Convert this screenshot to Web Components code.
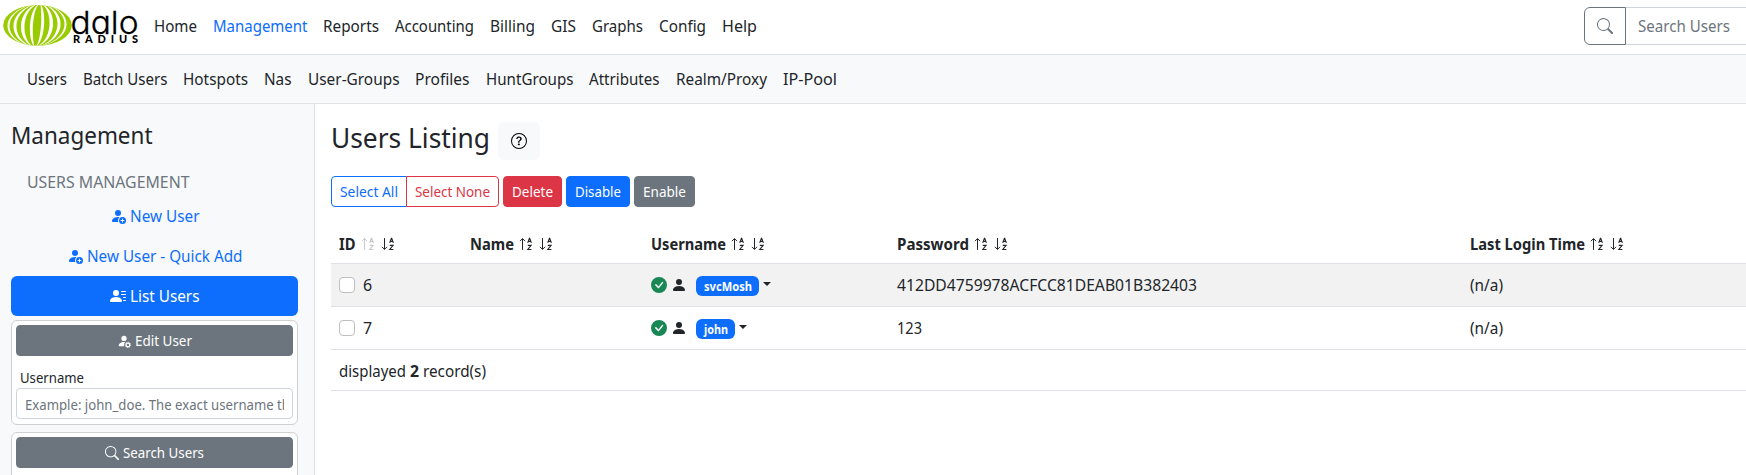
<!DOCTYPE html>
<html lang="en"><head><meta charset="utf-8"><title>daloRADIUS</title>
<style>
html,body{margin:0;height:100%;overflow:hidden;background:#fff}
body{font-family:"Noto Sans",sans-serif;font-size:16px;line-height:24px;color:#212529}
</style></head><body>
<dalo-app></dalo-app>
<script>
const def=(name,css,html,after)=>customElements.define(name,class extends HTMLElement{
  connectedCallback(){
    if(this.shadowRoot)return;
    const r=this.attachShadow({mode:'open'});
    const t=document.createElement('template');
    t.innerHTML='<style>*{box-sizing:border-box}'+css+'</style>'+(typeof html==='function'?html(this):html);
    r.appendChild(t.content.cloneNode(true));
    if(after)after(this,r);
  }
});
/* Text run with a fixed advance width: glyphs are condensed from the natural width. */
def('fit-text',':host{display:inline-block;white-space:pre}span{display:inline-block;transform-origin:0 50%}','<span><slot></slot></span>',(el,r)=>{
  const w=+el.getAttribute('w');if(!w)return;
  const s=r.querySelector('span');
  const nat=s.getBoundingClientRect().width;
  s.style.transform='scaleX('+(w/nat)+')';
  el.style.width=w+'px';
});
const ICONS={
 search:'<path d="M11.742 10.344a6.5 6.5 0 1 0-1.397 1.398h-.001q.044.06.098.115l3.85 3.85a1 1 0 0 0 1.415-1.414l-3.85-3.85a1 1 0 0 0-.115-.1zM12 6.5a5.5 5.5 0 1 1-11 0 5.5 5.5 0 0 1 11 0"/>',
 help:'<path d="M8 15A7 7 0 1 1 8 1a7 7 0 0 1 0 14m0 1A8 8 0 1 0 8 0a8 8 0 0 0 0 16"/><path d="M5.255 5.786a.237.237 0 0 0 .241.247h.825c.138 0 .248-.113.266-.25.09-.656.54-1.134 1.342-1.134.686 0 1.314.343 1.314 1.168 0 .635-.374.927-.965 1.371-.673.489-1.206 1.06-1.168 1.987l.003.217a.25.25 0 0 0 .25.246h.811a.25.25 0 0 0 .25-.25v-.105c0-.718.273-.927 1.01-1.486.609-.463 1.244-.977 1.244-2.056 0-1.511-1.276-2.241-2.673-2.241-1.267 0-2.655.59-2.75 2.286m1.557 5.763c0 .533.425.927 1.01.927.609 0 1.028-.394 1.028-.927 0-.552-.42-.94-1.029-.94-.584 0-1.009.388-1.009.94"/>',
 person:'<path d="M3 14s-1 0-1-1 1-4 6-4 6 3 6 4-1 1-1 1zm5-6a3 3 0 1 0 0-6 3 3 0 0 0 0 6"/>',
 check:'<path d="M16 8A8 8 0 1 1 0 8a8 8 0 0 1 16 0m-3.97-3.03a.75.75 0 0 0-1.08.022L7.477 9.417 5.384 7.323a.75.75 0 0 0-1.06 1.06L6.97 11.03a.75.75 0 0 0 1.079-.02l3.992-4.99a.75.75 0 0 0-.01-1.05z"/>',
 add:'<path d="M12.5 16a3.5 3.5 0 1 0 0-7 3.5 3.5 0 0 0 0 7m.5-5v1h1a.5.5 0 0 1 0 1h-1v1a.5.5 0 0 1-1 0v-1h-1a.5.5 0 0 1 0-1h1v-1a.5.5 0 0 1 1 0m-2-6a3 3 0 1 1-6 0 3 3 0 0 1 6 0"/><path d="M2 13c0 1 1 1 1 1h5.256A4.5 4.5 0 0 1 8 12.5a4.5 4.5 0 0 1 1.544-3.393Q8.844 9.002 8 9c-5 0-6 3-6 4"/>',
 gear:'<path d="M11 5a3 3 0 1 1-6 0 3 3 0 0 1 6 0"/><path d="M2 13c0 1 1 1 1 1h5.256A4.5 4.5 0 0 1 8 12.5a4.5 4.5 0 0 1 1.544-3.393Q8.844 9.002 8 9c-5 0-6 3-6 4"/><circle cx="12.5" cy="12.5" r="2.1" fill="none" stroke="currentColor" stroke-width="1.5"/><circle cx="12.5" cy="12.5" r="3.1" fill="none" stroke="currentColor" stroke-width="1" stroke-dasharray="1.3 1.13"/>',
 lines:'<path d="M6 8a3 3 0 1 0 0-6 3 3 0 0 0 0 6m-5 6s-1 0-1-1 1-4 6-4 6 3 6 4-1 1-1 1zM11 3.5a.5.5 0 0 1 .5-.5h4a.5.5 0 0 1 0 1h-4a.5.5 0 0 1-.5-.5m.5 2.5a.5.5 0 0 0 0 1h4a.5.5 0 0 0 0-1zm2 3a.5.5 0 0 0 0 1h2a.5.5 0 0 0 0-1zm0 3a.5.5 0 0 0 0 1h2a.5.5 0 0 0 0-1z"/>',
 up:'<g fill="none" stroke="currentColor"><path d="M4.5 13.5V3M2.2 4.9 4.5 2.6 6.8 4.9" stroke-linecap="round" stroke-linejoin="round"/><path stroke-width="1.1" d="M9.7 6.9 11.4 2.2h.3L13.4 6.9M10.3 5.4h2.5M9.8 9.4h3.3L9.8 13.5h3.6"/></g>',
 down:'<g fill="none" stroke="currentColor"><path d="M4.5 2.5V13M2.2 11.1 4.5 13.4 6.8 11.1" stroke-linecap="round" stroke-linejoin="round"/><path stroke-width="1.1" d="M9.7 6.9 11.4 2.2h.3L13.4 6.9M10.3 5.4h2.5M9.8 9.4h3.3L9.8 13.5h3.6"/></g>'
};
def('bi-icon',':host{display:inline-block;width:var(--s,16px);height:var(--s,16px);flex:none}svg{display:block;width:100%;height:100%}',
 el=>`<svg viewBox="0 0 16 16" fill="currentColor">${ICONS[el.getAttribute('name')]}</svg>`);
/* White gaps of the globe, given by where each crosses the equator. */
const meridian=(a,b)=>{const c=m=>((m-9.375)/.75).toFixed(1);return `<path d="M40 3C${c(a)} 9 ${c(a)} 41 35 47.5C${c(b)} 41 ${c(b)} 9 40 3"/>`};
def('dalo-logo',':host{display:block;width:145px;height:54px;flex:none}svg{display:block}',
`<svg width="145" height="54" viewBox="0 0 145 54"><defs><clipPath id="c"><ellipse cx="37.5" cy="25.3" rx="34.3" ry="20.4"/></clipPath></defs>
<ellipse cx="37.5" cy="25.3" rx="34.3" ry="20.4" fill="#9c0"/>
<g fill="#fff" clip-path="url(#c)">${[[7.5,9.5],[13.5,16.5],[21,24.5],[30,33],[41,44],[49.5,53],[57.5,60.5],[64.5,66.5]].map(p=>meridian(...p)).join('')}</g>
<text x="70.5" y="34" font-family="Inter" font-weight="300" font-size="31.5" textLength="68" lengthAdjust="spacingAndGlyphs" style="font-feature-settings:'cv11'" fill="#000" stroke="#000" stroke-width=".3">dalo</text>
<text x="73" y="43.3" font-family="Lato" font-weight="900" font-size="11" textLength="65" fill="#000">RADIUS</text></svg>`);
def('nav-bar',':host{display:flex;align-items:center;gap:16px}slot{display:contents}','<slot></slot>');
def('ui-button',`:host{display:flex;align-items:center;justify-content:center;height:31px;font-size:14px;line-height:21px;border-radius:4px;background:var(--bg,#6c757d);color:var(--fg,#fff);border:1px solid var(--bd,var(--bg,#6c757d));box-sizing:border-box;gap:4px;--s:14px}`,'<slot></slot>');
def('side-link',`:host{display:flex;align-items:center;justify-content:center;height:40px;gap:4px;color:#0d6efd;box-sizing:border-box}:host([active]){background:#0d6efd;color:#fff;border-radius:6px}`,'<slot></slot>');
def('side-card',`:host{display:block;box-sizing:border-box;background:#fff;border:1px solid #cfd0d1;border-radius:6px;padding:4px}`,'<slot></slot>');
def('search-box',`:host{display:flex;height:38px;width:200px;flex:none}.b{width:42px;border:1px solid #6c757d;border-radius:6px 0 0 6px;display:flex;align-items:center;justify-content:center;color:#6c757d}.i{flex:1;border:1px solid #ced4da;border-left:0;padding:6px 11.5px;color:#6c757d}`,
'<div class="b"><bi-icon name="search"></bi-icon></div><div class="i"><fit-text w="92">Search Users</fit-text></div>');
def('side-bar',`:host{display:block;width:315px;height:371px;background:#f8f9fa;border-right:1px solid #dee2e6;box-sizing:border-box;padding:16px 16px 0 11px;flex:none;overflow:hidden}
h4{margin:0;font-weight:400;font-size:24px;line-height:29px}.sub{color:#6c757d;padding:21px 0 0 15.5px;height:47px}
side-card{margin-top:4px;height:105px}.two{margin-top:7px}
.l{font-size:14px;line-height:21px;padding-left:4px;margin-top:11px}.in{border:1px solid #ced4da;border-radius:4px;height:31px;font-size:14px;line-height:21px;padding:5px 8px 3px;color:#6c757d;overflow:hidden;display:flex;margin:0}.in div{overflow:hidden;width:260px}`,
`<h4><fit-text w="141.5">Management</fit-text></h4><div class="sub"><fit-text w="162.5">USERS MANAGEMENT</fit-text></div>
<side-link><bi-icon name="add"></bi-icon><fit-text w="69.5">New User</fit-text></side-link>
<side-link><bi-icon name="add"></bi-icon><fit-text w="155.5">New User - Quick Add</fit-text></side-link>
<side-link active><bi-icon name="lines"></bi-icon><fit-text w="69.5">List Users</fit-text></side-link>
<side-card><ui-button><bi-icon name="gear"></bi-icon><fit-text w="57">Edit User</fit-text></ui-button><div class="l"><fit-text w="64">Username</fit-text></div><div class="in"><div><fit-text w="265">Example: john_doe. The exact username th</fit-text></div></div></side-card>
<side-card class="two"><ui-button><bi-icon name="search"></bi-icon><fit-text w="81">Search Users</fit-text></ui-button></side-card>`);
def('col-head',`:host{display:flex;align-items:center;font-weight:700;gap:4px}.dim{opacity:.25}`,
 el=>`<fit-text w="${el.getAttribute('w')}">${el.getAttribute('label')}</fit-text><bi-icon name="up" class="${el.hasAttribute('dim')?'dim':''}"></bi-icon><bi-icon name="down"></bi-icon>`);
def('user-cell',`:host{display:flex;align-items:center}.ok{color:#198754}.p{margin-left:4px}.bd{background:#0d6efd;color:#fff;font-weight:700;font-size:12px;line-height:12px;height:20px;border-radius:6px;padding:5px 7.5px 3px;margin-left:9px;margin-top:1px}.c{border:4.8px solid transparent;border-top-color:#212529;border-bottom:0;margin-left:4px;margin-bottom:3px}`,
 el=>`<bi-icon class="ok" name="check"></bi-icon><bi-icon class="p" name="person"></bi-icon><div class="bd"><fit-text w="${el.getAttribute('w')}">${el.getAttribute('label')}</fit-text></div><div class="c"></div>`);
def('data-row',`:host{display:grid;grid-template-columns:131px 181px 246px 573px 1fr;align-items:center;height:43px;border-bottom:1px solid #dee2e6;box-sizing:border-box;padding-left:8px}:host([odd]){background:#f2f2f2}:host([head]){height:41px;padding-top:1px}:host([foot]){height:41px;padding-top:1px}`,'<slot></slot>');
def('id-cell',`:host{display:flex;align-items:center;gap:8px}i{width:16px;height:16px;border:1px solid #bfbfbf;border-radius:4px;background:#fff}`,'<i></i><slot></slot>');
def('users-page',`:host{display:block;flex:1;min-width:0;padding:16px 0 0 16px}
header{display:flex;align-items:center;height:42px;margin-bottom:14px}h1{margin:-8px 0 0;font-weight:400;font-size:28px;line-height:34px}.q{width:42px;height:38px;border-radius:6px;background:#f8f9fa;display:flex;align-items:center;justify-content:center;color:#000;margin-left:8px}
.bar{display:flex;gap:4px;margin-bottom:16px}.grp{display:flex}.a{--bg:#fff;--fg:#0d6efd;--bd:#0d6efd;width:76px;border-radius:4px 0 0 4px;}.n{--bg:#fff;--fg:#dc3545;--bd:#dc3545;width:93px;margin-left:-1px;border-radius:0 4px 4px 0}.d{--bg:#dc3545;width:59px}.s{--bg:#0d6efd;width:64px}.e{width:61px}`,
`<header><h1><fit-text w="159">Users Listing</fit-text></h1><div class="q"><bi-icon name="help"></bi-icon></div></header>
<div class="bar"><div class="grp"><ui-button class="a"><fit-text w="58">Select All</fit-text></ui-button><ui-button class="n"><fit-text w="75">Select None</fit-text></ui-button></div><ui-button class="d"><fit-text w="41">Delete</fit-text></ui-button><ui-button class="s"><fit-text w="46">Disable</fit-text></ui-button><ui-button class="e"><fit-text w="43">Enable</fit-text></ui-button></div>
<data-row head><col-head w="16.5" label="ID" dim></col-head><col-head w="44" label="Name"></col-head><col-head w="75" label="Username"></col-head><col-head w="72" label="Password"></col-head><col-head w="115" label="Last Login Time"></col-head></data-row>
<data-row odd><id-cell>6</id-cell><span></span><user-cell w="48" label="svcMosh"></user-cell><fit-text w="300">412DD4759978ACFCC81DEAB01B382403</fit-text><fit-text w="33">(n/a)</fit-text></data-row>
<data-row><id-cell>7</id-cell><span></span><user-cell w="24" label="john"></user-cell><fit-text w="25">123</fit-text><fit-text w="33">(n/a)</fit-text></data-row>
<data-row foot><div style="white-space:nowrap"><fit-text w="67">displayed</fit-text><span style="display:inline-block;width:4px"></span><b><fit-text w="9">2</fit-text></b><span style="display:inline-block;width:4px"></span><fit-text w="63">record(s)</fit-text></div></data-row>`);
const items=a=>a.map(([t,w,c])=>`<fit-text w="${w}"${c?' style="color:#0d6efd"':''}>${t}</fit-text>`).join('');
def('dalo-app',`:host{display:block;height:475px;overflow:hidden}.top{height:55px;border-bottom:1px solid #dee2e6;display:flex;align-items:flex-start}.top nav-bar{height:52px;padding-left:8.5px;flex:1}.top search-box{margin:7px -38px 0 0}.sub{height:49px;border-bottom:1px solid #dee2e6;background:#f8f9fa;padding:0 0 0 26.5px;display:flex}.body{display:flex}`,
`<div class="top"><dalo-logo></dalo-logo><nav-bar>${items([['Home',43],['Management',94.5,1],['Reports',56],['Accounting',79],['Billing',45],['GIS',25],['Graphs',51],['Config',47],['Help',35]])}</nav-bar><search-box></search-box></div>
<div class="sub"><nav-bar>${items([['Users',40],['Batch Users',84.5],['Hotspots',65],['Nas',27.5],['User-Groups',91.5],['Profiles',54.5],['HuntGroups',87.5],['Attributes',70.5],['Realm/Proxy',91],['IP-Pool',54]])}</nav-bar></div>
<div class="body"><side-bar></side-bar><users-page></users-page></div>`);
</script></body></html>
